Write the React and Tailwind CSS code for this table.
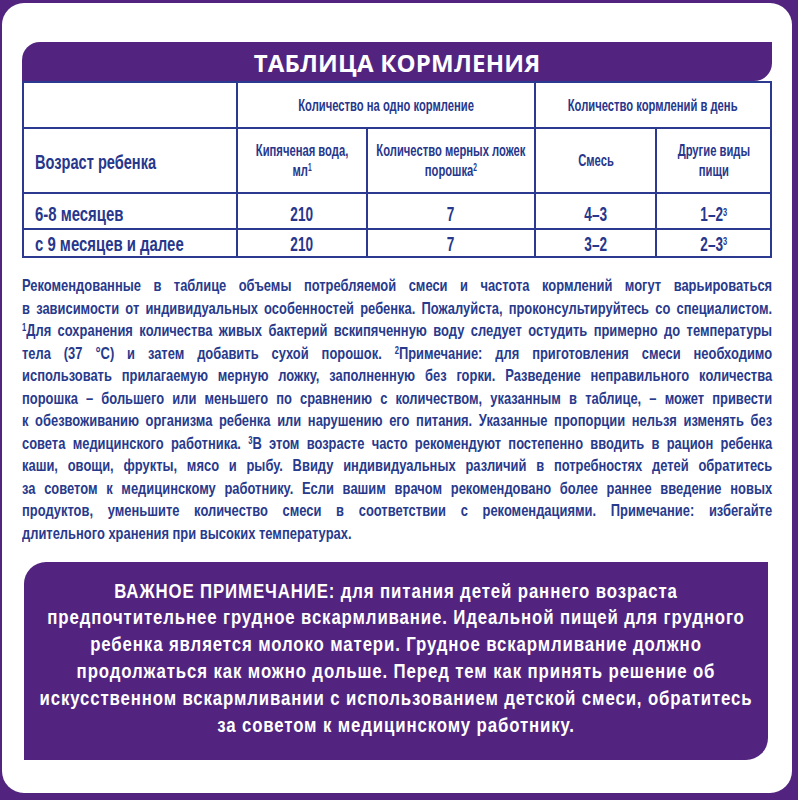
import React from 'react';

const arial = { fontFamily: '"Liberation Sans", Arial, sans-serif' };

const noteLines = [
  'Рекомендованные в таблице объемы потребляемой смеси и частота кормлений могут варьироваться',
  'в зависимости от индивидуальных особенностей ребенка. Пожалуйста, проконсультируйтесь со специалистом.',
  <><sup className="text-[10px]">1</sup>Для сохранения количества живых бактерий вскипяченную воду следует остудить примерно до температуры</>,
  <>тела (37 °C) и затем добавить сухой порошок. <sup className="text-[10px]">2</sup>Примечание: для приготовления смеси необходимо</>,
  'использовать прилагаемую мерную ложку, заполненную без горки. Разведение неправильного количества',
  'порошка – большего или меньшего по сравнению с количеством, указанным в таблице, – может привести',
  'к обезвоживанию организма ребенка или нарушению его питания. Указанные пропорции нельзя изменять без',
  <>совета медицинского работника. <sup className="text-[10px]">3</sup>В этом возрасте часто рекомендуют постепенно вводить в рацион ребенка</>,
  'каши, овощи, фрукты, мясо и рыбу. Ввиду индивидуальных различий в потребностях детей обратитесь',
  'за советом к медицинскому работнику. Если вашим врачом рекомендовано более раннее введение новых',
  'продуктов, уменьшите количество смеси в соответствии с рекомендациями. Примечание: избегайте',
];

const noticeLines = [
  'ВАЖНОЕ ПРИМЕЧАНИЕ: для питания детей раннего возраста',
  'предпочтительнее грудное вскармливание. Идеальной пищей для грудного',
  'ребенка является молоко матери. Грудное вскармливание должно',
  'продолжаться как можно дольше. Перед тем как принять решение об',
  'искусственном вскармливании с использованием детской смеси, обратитесь',
  'за советом к медицинскому работнику.',
];

const rows = [
  { age: '6-8 месяцев', water: '210', spoons: '7', mix: '4–3', other: '1–2' },
  { age: 'с 9 месяцев и далее', water: '210', spoons: '7', mix: '3–2', other: '2–3' },
];

// narrow text: Liberation Sans squeezed horizontally, like a condensed face
function Head({ children }) {
  return (
    <span className="inline-block whitespace-nowrap text-center text-[17px] leading-[20px] origin-center scale-x-[0.66]">
      {children}
    </span>
  );
}

function Num({ children }) {
  return (
    <span className="inline-block whitespace-nowrap text-[20px] leading-[22px] origin-center scale-x-[0.68]">
      {children}
    </span>
  );
}

function Cell({ children, className = '' }) {
  return (
    <div className={`bg-white flex items-center justify-center min-w-0 ${className}`}>
      {children}
    </div>
  );
}

export default function App() {
  return (
    <div className="w-[798px] h-[800px] overflow-hidden bg-[#52247f] pt-[3px] pl-[2px] pr-[6px] pb-[7px]">
      <div className="h-full bg-white rounded-[22px] pt-[39px] px-[20px] flex flex-col" style={arial}>
        {/* header band */}
        <div className="h-[39px] bg-[#52247f] rounded-tl-[18px] rounded-br-[18px] flex items-center justify-center">
          <h1
            className="text-white text-[24px] font-bold tracking-[0.2px] pt-[3px]"
            style={{ fontFamily: '"Open Sans", "Liberation Sans", sans-serif' }}
          >
            ТАБЛИЦА КОРМЛЕНИЯ
          </h1>
        </div>

        {/* table */}
        <div className="grid grid-cols-[212px_128px_166px_119px_113px] grid-rows-[44px_63px_34px_26px] gap-[2px] p-[2px] bg-[#2b3990] text-[#27378c] font-bold">
          <Cell />
          <Cell className="col-span-2 pt-[2px]"><Head>Количество на одно кормление</Head></Cell>
          <Cell className="col-span-2 pt-[2px]"><Head>Количество кормлений в день</Head></Cell>

          <Cell className="justify-start pl-[11px] pt-[2px]">
            <span className="inline-block whitespace-nowrap text-[20px] origin-left scale-x-[0.73]">Возраст ребенка</span>
          </Cell>
          <Cell><Head>Кипяченая вода,<br />мл<sup className="text-[10px]">1</sup></Head></Cell>
          <Cell><Head>Количество мерных ложек<br />порошка<sup className="text-[10px]">2</sup></Head></Cell>
          <Cell><Head>Смесь</Head></Cell>
          <Cell><Head>Другие виды<br />пищи</Head></Cell>

          {rows.map((r, i) => {
            const pos = i === 0 ? 'items-end pb-[3px]' : 'pt-[1px]';
            return (
              <React.Fragment key={r.age}>
                <Cell className={`justify-start pl-[11px] ${pos}`}>
                  <span className="inline-block whitespace-nowrap text-[21px] leading-[22px] origin-left scale-x-[0.71]">{r.age}</span>
                </Cell>
                <Cell className={pos}><Num>{r.water}</Num></Cell>
                <Cell className={pos}><Num>{r.spoons}</Num></Cell>
                <Cell className={pos}><Num>{r.mix}</Num></Cell>
                <Cell className={pos}><Num>{r.other}<sup className="text-[11px]">3</sup></Num></Cell>
              </React.Fragment>
            );
          })}
        </div>

        {/* notes */}
        <div className="mt-[17px] h-[270px] text-[#283a8c] font-bold text-[17px] leading-[22.5px]">
          <div className="w-[987px] origin-top-left scale-x-[0.76]">
            {noteLines.map((line, i) => (
              <div key={i} className="whitespace-nowrap text-justify [text-align-last:justify]">
                {line}
              </div>
            ))}
            <div className="whitespace-nowrap">длительного хранения при высоких температурах.</div>
          </div>
        </div>

        {/* important note */}
        <div className="mt-[17px] ml-[2px] mr-[4px] h-[198px] bg-[#52247f] rounded-tl-[22px] rounded-br-[22px] flex items-center justify-center pb-[6px]">
          <div className="shrink-0 w-[900px] text-white text-center text-[21px] leading-[26.8px] tracking-[1.1px] font-bold origin-center scale-x-[0.8]">
            {noticeLines.map((line, i) => (
              <div key={i} className="whitespace-nowrap">{line}</div>
            ))}
          </div>
        </div>
      </div>
    </div>
  );
}
